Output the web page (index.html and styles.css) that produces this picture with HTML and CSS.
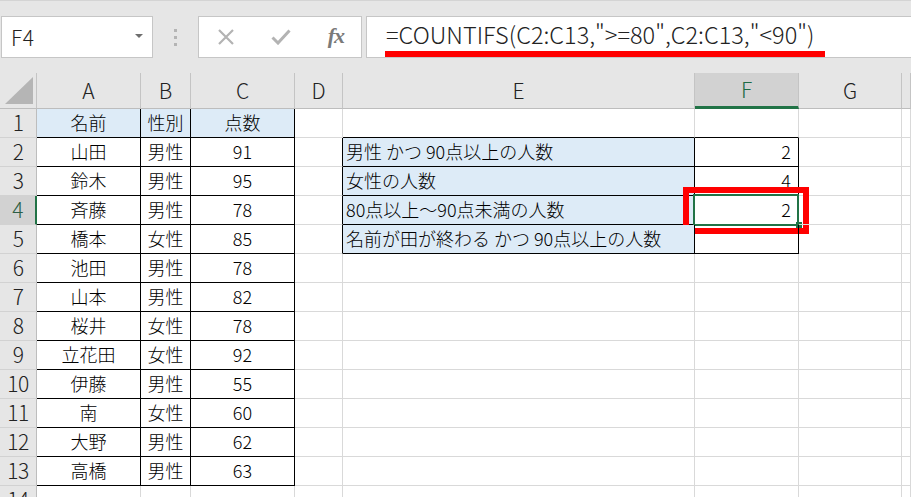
FILE: index.html
```html
<!DOCTYPE html>
<html lang="ja">
<head>
<meta charset="utf-8">
<title>COUNTIFS</title>
<link rel="stylesheet" href="styles.css">
</head>
<body>
<div class="toolbar">
  <div class="namebox"><span class="ref">F4</span><svg class="caret" width="8" height="5" viewBox="0 0 8 5"><path d="M0 0H8L4 4Z" fill="#6e6e6e"/></svg></div>
  <div class="grip"><span></span><span></span><span></span></div>
  <div class="funcbox">
    <svg width="18" height="16" viewBox="0 0 18 16"><path d="M2 1L16 15M16 1L2 15" stroke="#b3b3b3" stroke-width="2.2" fill="none"/></svg>
    <svg width="20" height="16" viewBox="0 0 20 16"><path d="M1.5 8.5L7 14L18.5 1.5" stroke="#b3b3b3" stroke-width="3" fill="none"/></svg>
    <span class="fx">fx</span>
  </div>
  <div class="formula">
    <div class="ftext">=COUNTIFS(C2:C13,"&gt;=80",C2:C13,"&lt;90")</div>
    <div class="mark"></div>
  </div>
</div>

<div class="sheet">
  <div class="row head">
    <div class="corner"><svg width="28" height="27" viewBox="0 0 28 27"><path d="M28 0V27H0Z" fill="#b5b5b5"/></svg></div>
    <div class="ch">A</div><div class="ch">B</div><div class="ch">C</div><div class="ch">D</div><div class="ch">E</div><div class="ch csel">F</div><div class="ch">G</div><div class="ch"></div>
  </div>
  <div class="row">
    <div class="rh">1</div>
    <div class="cell t fill">名前</div><div class="cell t fill">性別</div><div class="cell t fill">点数</div>
    <div class="cell"></div><div class="cell bt"></div><div class="cell bt"></div><div class="cell"></div><div class="cell"></div>
  </div>
  <div class="row">
    <div class="rh">2</div>
    <div class="cell t">山田</div><div class="cell t">男性</div><div class="cell t">91</div>
    <div class="cell bl"></div><div class="cell e">男性 かつ 90点以上の人数</div><div class="cell f">2</div><div class="cell"></div><div class="cell"></div>
  </div>
  <div class="row">
    <div class="rh">3</div>
    <div class="cell t">鈴木</div><div class="cell t">男性</div><div class="cell t">95</div>
    <div class="cell bl"></div><div class="cell e">女性の人数</div><div class="cell f">4</div><div class="cell"></div><div class="cell"></div>
  </div>
  <div class="row">
    <div class="rh rsel">4</div>
    <div class="cell t">斉藤</div><div class="cell t">男性</div><div class="cell t">78</div>
    <div class="cell bl"></div><div class="cell e">80点以上～90点未満の人数</div><div class="cell f active">2<span class="handle"></span><span class="callout"></span></div><div class="cell"></div><div class="cell"></div>
  </div>
  <div class="row">
    <div class="rh">5</div>
    <div class="cell t">橋本</div><div class="cell t">女性</div><div class="cell t">85</div>
    <div class="cell bl"></div><div class="cell e">名前が田が終わる かつ 90点以上の人数</div><div class="cell f"></div><div class="cell"></div><div class="cell"></div>
  </div>
  <div class="row">
    <div class="rh">6</div>
    <div class="cell t">池田</div><div class="cell t">男性</div><div class="cell t">78</div>
    <div class="cell"></div><div class="cell"></div><div class="cell"></div><div class="cell"></div><div class="cell"></div>
  </div>
  <div class="row">
    <div class="rh">7</div>
    <div class="cell t">山本</div><div class="cell t">男性</div><div class="cell t">82</div>
    <div class="cell"></div><div class="cell"></div><div class="cell"></div><div class="cell"></div><div class="cell"></div>
  </div>
  <div class="row">
    <div class="rh">8</div>
    <div class="cell t">桜井</div><div class="cell t">女性</div><div class="cell t">78</div>
    <div class="cell"></div><div class="cell"></div><div class="cell"></div><div class="cell"></div><div class="cell"></div>
  </div>
  <div class="row">
    <div class="rh">9</div>
    <div class="cell t">立花田</div><div class="cell t">女性</div><div class="cell t">92</div>
    <div class="cell"></div><div class="cell"></div><div class="cell"></div><div class="cell"></div><div class="cell"></div>
  </div>
  <div class="row">
    <div class="rh">10</div>
    <div class="cell t">伊藤</div><div class="cell t">男性</div><div class="cell t">55</div>
    <div class="cell"></div><div class="cell"></div><div class="cell"></div><div class="cell"></div><div class="cell"></div>
  </div>
  <div class="row">
    <div class="rh">11</div>
    <div class="cell t">南</div><div class="cell t">女性</div><div class="cell t">60</div>
    <div class="cell"></div><div class="cell"></div><div class="cell"></div><div class="cell"></div><div class="cell"></div>
  </div>
  <div class="row">
    <div class="rh">12</div>
    <div class="cell t">大野</div><div class="cell t">男性</div><div class="cell t">62</div>
    <div class="cell"></div><div class="cell"></div><div class="cell"></div><div class="cell"></div><div class="cell"></div>
  </div>
  <div class="row">
    <div class="rh">13</div>
    <div class="cell t">高橋</div><div class="cell t">男性</div><div class="cell t">63</div>
    <div class="cell"></div><div class="cell"></div><div class="cell"></div><div class="cell"></div><div class="cell"></div>
  </div>
  <div class="row">
    <div class="rh">14</div>
    <div class="cell"></div><div class="cell"></div><div class="cell"></div>
    <div class="cell"></div><div class="cell"></div><div class="cell"></div><div class="cell"></div><div class="cell"></div>
  </div>
</div>
</body>
</html>
```

FILE: styles.css
```css
* { box-sizing: border-box; }
html, body { margin: 0; padding: 0; }
body {
  width: 911px;
  height: 497px;
  overflow: hidden;
  background: #e6e6e6;
  font-family: "Noto Sans CJK JP", "Noto Sans", sans-serif;
  font-weight: 300;
  color: #000;
}

/* ---------- formula bar ---------- */
.toolbar {
  height: 73px;
  border-top: 1px solid #d4d4d4;
  padding-top: 15px;
  display: flex;
  align-items: flex-start;
}
.namebox {
  margin-left: 1px;
  width: 152px;
  height: 42px;
  background: #fff;
  border: 1px solid #c6c6c6;
  display: flex;
  align-items: center;
  justify-content: space-between;
  padding: 0 9px 0 9px;
}
.ref {
  font-size: 21px;
  color: #222;
  letter-spacing: 0.5px;
}
.caret { margin-top: -2px; }
.grip {
  width: 45px;
  height: 42px;
  display: flex;
  flex-direction: column;
  align-items: center;
  justify-content: center;
  gap: 4px;
}
.grip span {
  width: 3px;
  height: 3px;
  background: #b4b4b4;
}
.funcbox {
  width: 164px;
  height: 42px;
  background: #fff;
  border: 1px solid #c6c6c6;
  display: flex;
  align-items: center;
  padding: 0 17px 0 18px;
  justify-content: space-between;
}
.fx {
  font-family: "Liberation Serif", serif;
  font-style: italic;
  font-weight: bold;
  font-size: 22px;
  color: #7a7a7a;
  letter-spacing: -1px;
  margin-top: -3px;
}
.formula {
  margin-left: 4px;
  flex: 1;
  height: 42px;
  background: #fff;
  border: 1px solid #c6c6c6;
  border-right: none;
  display: flex;
  flex-direction: column;
  justify-content: space-between;
}
.ftext {
  padding-left: 19px;
  font-size: 23.5px;
  line-height: 30px;
  margin-top: 2px;
  color: #222;
  white-space: nowrap;
}
.mark {
  margin-left: 18px;
  width: 440px;
  height: 6px;
  background: #ff0000;
}

/* ---------- sheet ---------- */
.sheet { background: #fff; }
.row {
  display: grid;
  grid-template-columns: 37px 104px 50px 104px 48px 352px 104px 103px 9px;
  height: 29px;
}
.row.head {
  height: 36px;
  background: #e6e6e6;
}
.corner {
  border-right: 1px solid #c4c4c4;
  border-bottom: 1px solid #bdbdbd;
  display: flex;
  align-items: flex-start;
  justify-content: flex-start;
  padding: 4px 0 0 5px;
}
.ch {
  border-right: 1px solid #c4c4c4;
  border-bottom: 1px solid #bdbdbd;
  font-size: 21px;
  line-height: 35px;
  text-align: center;
  color: #222;
}
.ch.csel {
  background: #d2d2d2;
  color: #1e6b45;
  border-bottom: 3px solid #217346;
  line-height: 33px;
}
.rh {
  background: #e6e6e6;
  border-right: 1px solid #bdbdbd;
  border-bottom: 1px solid #d2d2d2;
  font-size: 21px;
  line-height: 27px;
  text-align: center;
  color: #222;
  letter-spacing: -0.5px;
}
.rh.rsel {
  background: #d2d2d2;
  color: #2d5e45;
  border-right: 2px solid #217346;
}
.cell {
  border-right: 1px solid #d9d9d9;
  border-bottom: 1px solid #d9d9d9;
  font-size: 18px;
  line-height: 27px;
  white-space: nowrap;
  position: relative;
}
.t {
  border-right-color: #000;
  border-bottom-color: #000;
  text-align: center;
}
.fill { background: #ddebf7; }
.bl { border-right-color: #000; }
.bt { border-bottom-color: #000; }
.e {
  background: #ddebf7;
  border-right-color: #000;
  border-bottom-color: #000;
  padding-left: 3px;
}
.f {
  border-right-color: #000;
  border-bottom-color: #000;
  text-align: right;
  padding-right: 7px;
}

/* active cell + annotation */
.active::before {
  content: "";
  position: absolute;
  left: -2px;
  top: -2px;
  right: -1px;
  bottom: -2px;
  border: 2px solid #217346;
}
.handle {
  position: absolute;
  right: -4px;
  bottom: -4px;
  width: 6px;
  height: 6px;
  background: #217346;
}
.callout {
  position: absolute;
  left: -12px;
  top: -9px;
  width: 126px;
  height: 47px;
  border: 6px solid #ff0000;
}
```
